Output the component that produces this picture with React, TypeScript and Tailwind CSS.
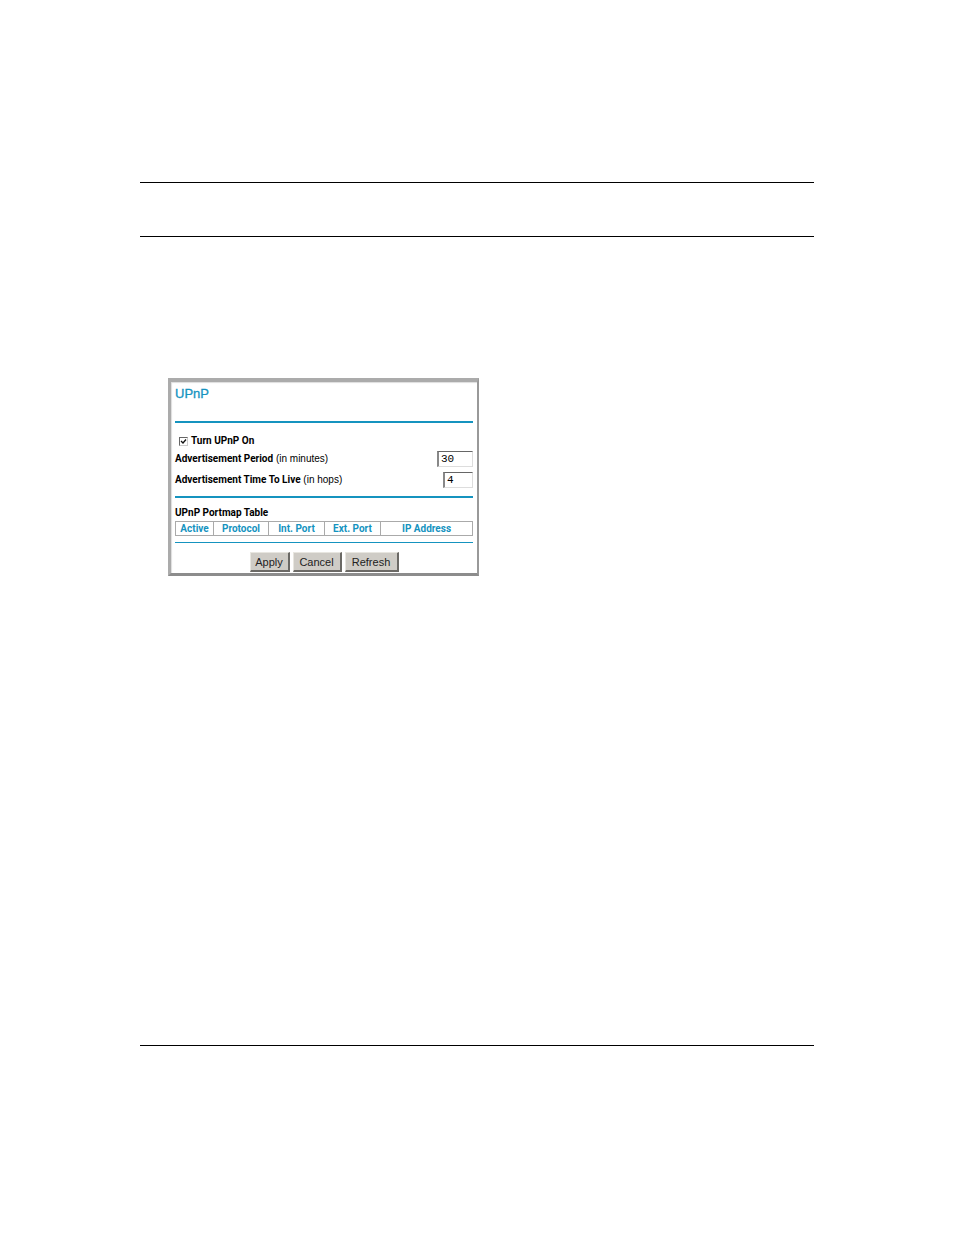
import { useState } from 'react';

interface Column {
  label: string;
  width: string;
}

const columns: Column[] = [
  { label: 'Active', width: 'w-[38px]' },
  { label: 'Protocol', width: 'w-[55px]' },
  { label: 'Int. Port', width: 'w-[56px]' },
  { label: 'Ext. Port', width: 'w-[56px]' },
  { label: 'IP Address', width: 'w-auto' },
];

const fieldClass =
  "h-4 border border-t-[#666] border-l-2 border-l-[#888] border-r-[#ddd] border-b-[#ddd] bg-white pl-0.5 font-['Liberation_Mono',monospace] text-[11px] leading-3 text-black outline-none";

const buttonClass =
  'h-5 border border-t-[#e8e6e0] border-l-[#e8e6e0] border-r-2 border-b-2 border-r-[#6b6965] border-b-[#6b6965] bg-[#cfccc6] text-[11px] leading-4 text-[#222]';

function UpnpPanel() {
  const [enabled, setEnabled] = useState(true);
  const [period, setPeriod] = useState('30');
  const [hops, setHops] = useState('4');

  return (
    <form
      onSubmit={(e) => e.preventDefault()}
      className="w-[311px] border-3 border-t-4 border-r-2 border-[#ababab] border-r-[#999] border-b-[#8c8c8c] bg-white px-1 pt-1 pb-px text-[10px] leading-3 text-black shadow-[inset_1px_1px_1px_#ddd]"
    >
      <h1 className="h-[35px] text-[13px] leading-4 font-medium text-[#1593bf] [-webkit-text-stroke:0.3px_#1593bf]">
        UPnP
      </h1>
      <hr className="border-0 border-t-2 border-[#1593bf]" />

      <div className="mt-3 flex h-3 items-center gap-[3px] pl-1 font-['Roboto',sans-serif] font-bold">
        <span className="relative flex">
          <input
            id="upnp-on"
            type="checkbox"
            checked={enabled}
            onChange={(e) => setEnabled(e.target.checked)}
            className="size-[9px] appearance-none border border-[#ccc] border-t-[#666] border-l-[#666] bg-white"
          />
          {enabled && (
            <svg viewBox="0 0 9 9" className="pointer-events-none absolute inset-0 size-[9px]">
              <path d="M2 4 L4 6 L7 2.5" fill="none" stroke="#111" strokeWidth="1.3" />
            </svg>
          )}
        </span>
        <label htmlFor="upnp-on">Turn UPnP On</label>
      </div>

      <div className="mt-1 flex items-center justify-between">
        <label htmlFor="period">
          <b className="font-['Roboto',sans-serif]">Advertisement Period</b> (in minutes)
        </label>
        <input
          id="period"
          type="text"
          value={period}
          onChange={(e) => setPeriod(e.target.value)}
          className={`${fieldClass} w-9`}
        />
      </div>
      <div className="mt-[5px] flex items-center justify-between">
        <label htmlFor="hops">
          <b className="font-['Roboto',sans-serif]">Advertisement Time To Live</b> (in hops)
        </label>
        <input
          id="hops"
          type="text"
          value={hops}
          onChange={(e) => setHops(e.target.value)}
          className={`${fieldClass} w-[30px]`}
        />
      </div>
      <hr className="mt-2 border-0 border-t-2 border-[#1593bf]" />

      <h2 className="mt-[9px] font-['Roboto',sans-serif] font-bold">UPnP Portmap Table</h2>
      <table className="mt-0.5 w-full table-fixed border-collapse border border-[#aaa]">
        <thead>
          <tr>
            {columns.map((column) => (
              <th
                key={column.label}
                className={`${column.width} h-[14px] border border-[#aaa] p-0 text-center font-['Roboto',sans-serif] font-bold text-[#1593bf]`}
              >
                {column.label}
              </th>
            ))}
          </tr>
        </thead>
      </table>
      <hr className="mt-1.5 border-0 border-t border-[#1593bf]" />

      <div className="mt-[9px] flex justify-center gap-[3px]">
        <button type="submit" className={`${buttonClass} w-10`}>Apply</button>
        <button type="button" className={`${buttonClass} w-[49px]`}>Cancel</button>
        <button type="button" className={`${buttonClass} w-[54px]`}>Refresh</button>
      </div>
    </form>
  );
}

export default function App() {
  return (
    <div className="min-h-screen bg-white px-[140px] pt-[182px] pb-[189px] font-['Liberation_Sans',Arial,sans-serif]">
      <header className="h-[55px] border-y border-black" />
      <main className="min-h-[808px] pt-[141px] pl-7">
        <UpnpPanel />
      </main>
      <footer className="border-t border-black" />
    </div>
  );
}
